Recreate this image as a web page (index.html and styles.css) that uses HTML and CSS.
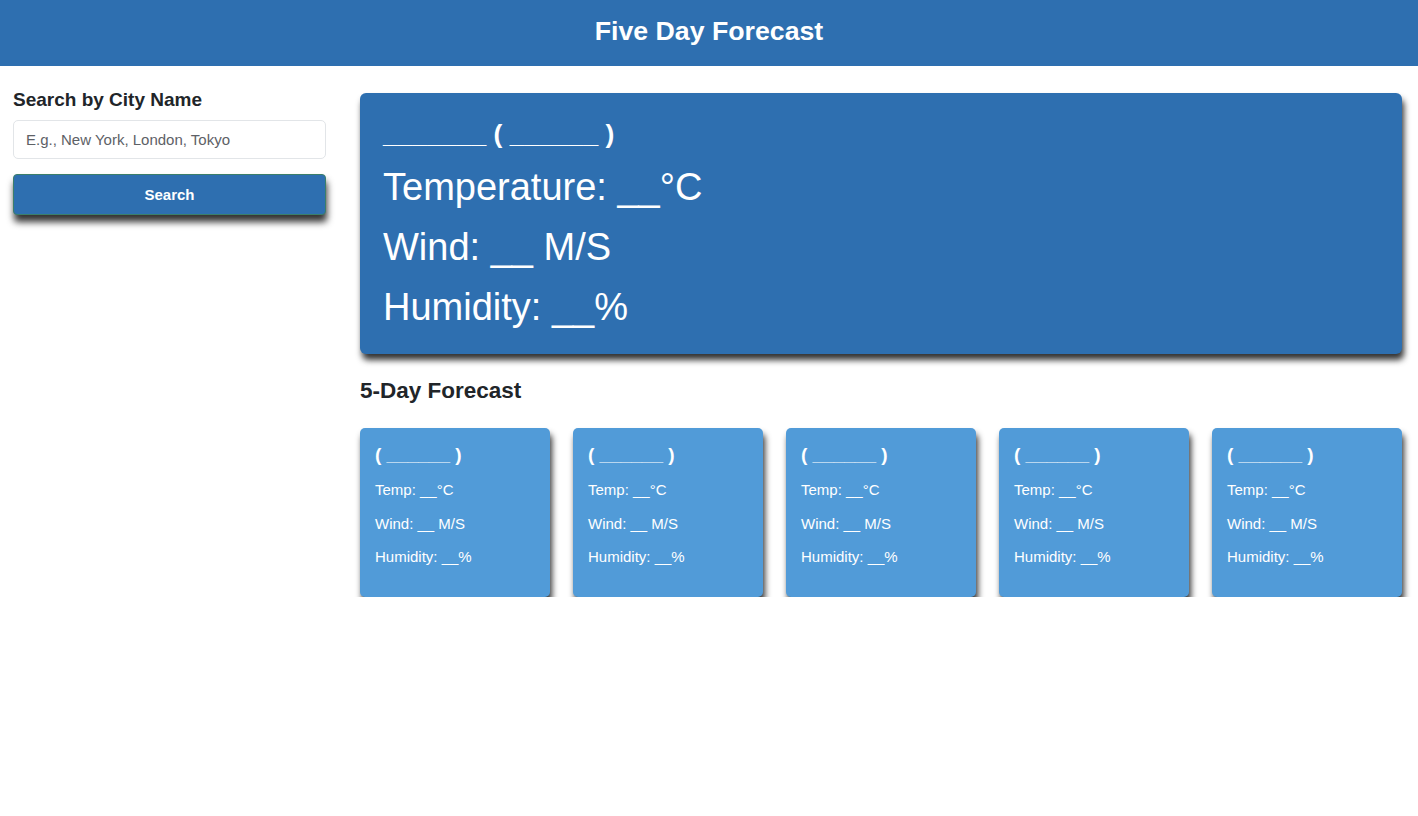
FILE: index.html
```html
<!DOCTYPE html>
<html lang="en">
<head>
<meta charset="utf-8">
<title>Five Day Forecast</title>
<link rel="stylesheet" href="styles.css">
</head>
<body>
<header class="top">
  <h1 class="top-title">Five Day Forecast</h1>
</header>
<div class="page">
  <aside class="side">
    <h3 class="side-title">Search by City Name</h3>
    <input class="city-input" type="text" placeholder="E.g., New York, London, Tokyo">
    <button class="search-btn" type="button">Search</button>
  </aside>
  <main class="main">
    <section class="current">
      <h2 class="current-title">_______ ( ______ )</h2>
      <p class="current-line">Temperature: __°C</p>
      <p class="current-line">Wind: __ M/S</p>
      <p class="current-line">Humidity: __%</p>
    </section>
    <h3 class="forecast-title">5-Day Forecast</h3>
    <div class="cards">
      <div class="card"><h4 class="card-title">( ______ )</h4><p class="card-line">Temp: __°C</p><p class="card-line">Wind: __ M/S</p><p class="card-line">Humidity: __%</p></div>
      <div class="card"><h4 class="card-title">( ______ )</h4><p class="card-line">Temp: __°C</p><p class="card-line">Wind: __ M/S</p><p class="card-line">Humidity: __%</p></div>
      <div class="card"><h4 class="card-title">( ______ )</h4><p class="card-line">Temp: __°C</p><p class="card-line">Wind: __ M/S</p><p class="card-line">Humidity: __%</p></div>
      <div class="card"><h4 class="card-title">( ______ )</h4><p class="card-line">Temp: __°C</p><p class="card-line">Wind: __ M/S</p><p class="card-line">Humidity: __%</p></div>
      <div class="card"><h4 class="card-title">( ______ )</h4><p class="card-line">Temp: __°C</p><p class="card-line">Wind: __ M/S</p><p class="card-line">Humidity: __%</p></div>
    </div>
  </main>
</div>
</body>
</html>
```
FILE: styles.css
```css
* { box-sizing: border-box; }
body {
  margin: 0;
  font-family: "Liberation Sans", Arial, sans-serif;
  color: #212529;
  background: #fff;
}
.top {
  background: #2e6fb0;
  height: 66px;
  display: flex;
  align-items: center;
  justify-content: center;
  padding-bottom: 4px;
}
.top-title {
  margin: 0;
  color: #fff;
  font-size: 26.7px;
  font-weight: bold;
}
.page {
  display: flex;
  padding: 0 16px 0 13px;
  gap: 34px;
}
.side {
  width: 313px;
  flex: none;
  display: flex;
  flex-direction: column;
  padding-top: 22px;
}
.side-title {
  margin: 0 0 9px;
  font-size: 19px;
  font-weight: bold;
  line-height: 23px;
}
.city-input {
  height: 39px;
  border: 1px solid #e2e5e8;
  border-radius: 5px;
  padding: 0 12px;
  font-family: inherit;
  font-size: 15px;
  color: #212529;
}
.city-input::placeholder { color: #5d6166; }
.search-btn {
  margin-top: 15px;
  height: 41px;
  background: #2e6fb0;
  color: #fff;
  font-family: inherit;
  font-weight: bold;
  font-size: 15px;
  border: 1px solid #3b7f6a;
  border-radius: 4px;
  box-shadow: 1px 7px 7px rgba(0,0,0,0.8);
}
.main {
  flex: 1;
  padding-top: 27px;
}
.current {
  background: #2e6fb0;
  border-radius: 6px;
  color: #fff;
  height: 261px;
  padding: 25px 23px 0;
  box-shadow: 2px 6px 6px rgba(0,0,0,0.8);
}
.current-title {
  margin: 0 0 7px;
  font-size: 26.5px;
  font-weight: bold;
  line-height: 32px;
}
.current-line {
  margin: 0;
  font-size: 38px;
  line-height: 60px;
}
.forecast-title {
  margin: 23px 0 24px;
  font-size: 22.5px;
  font-weight: bold;
  line-height: 27px;
}
.cards {
  display: flex;
  gap: 23px;
}
.card {
  flex: 1;
  height: 169px;
  background: #519bd8;
  border-radius: 5px;
  color: #fff;
  padding: 14px 15px;
  box-shadow: 2px 6px 6px rgba(0,0,0,0.8);
}
.card-title {
  margin: 0 0 5px;
  font-size: 19px;
  font-weight: bold;
  line-height: 26px;
}
.card-line {
  margin: 0;
  font-size: 15px;
  line-height: 33.5px;
}
```
